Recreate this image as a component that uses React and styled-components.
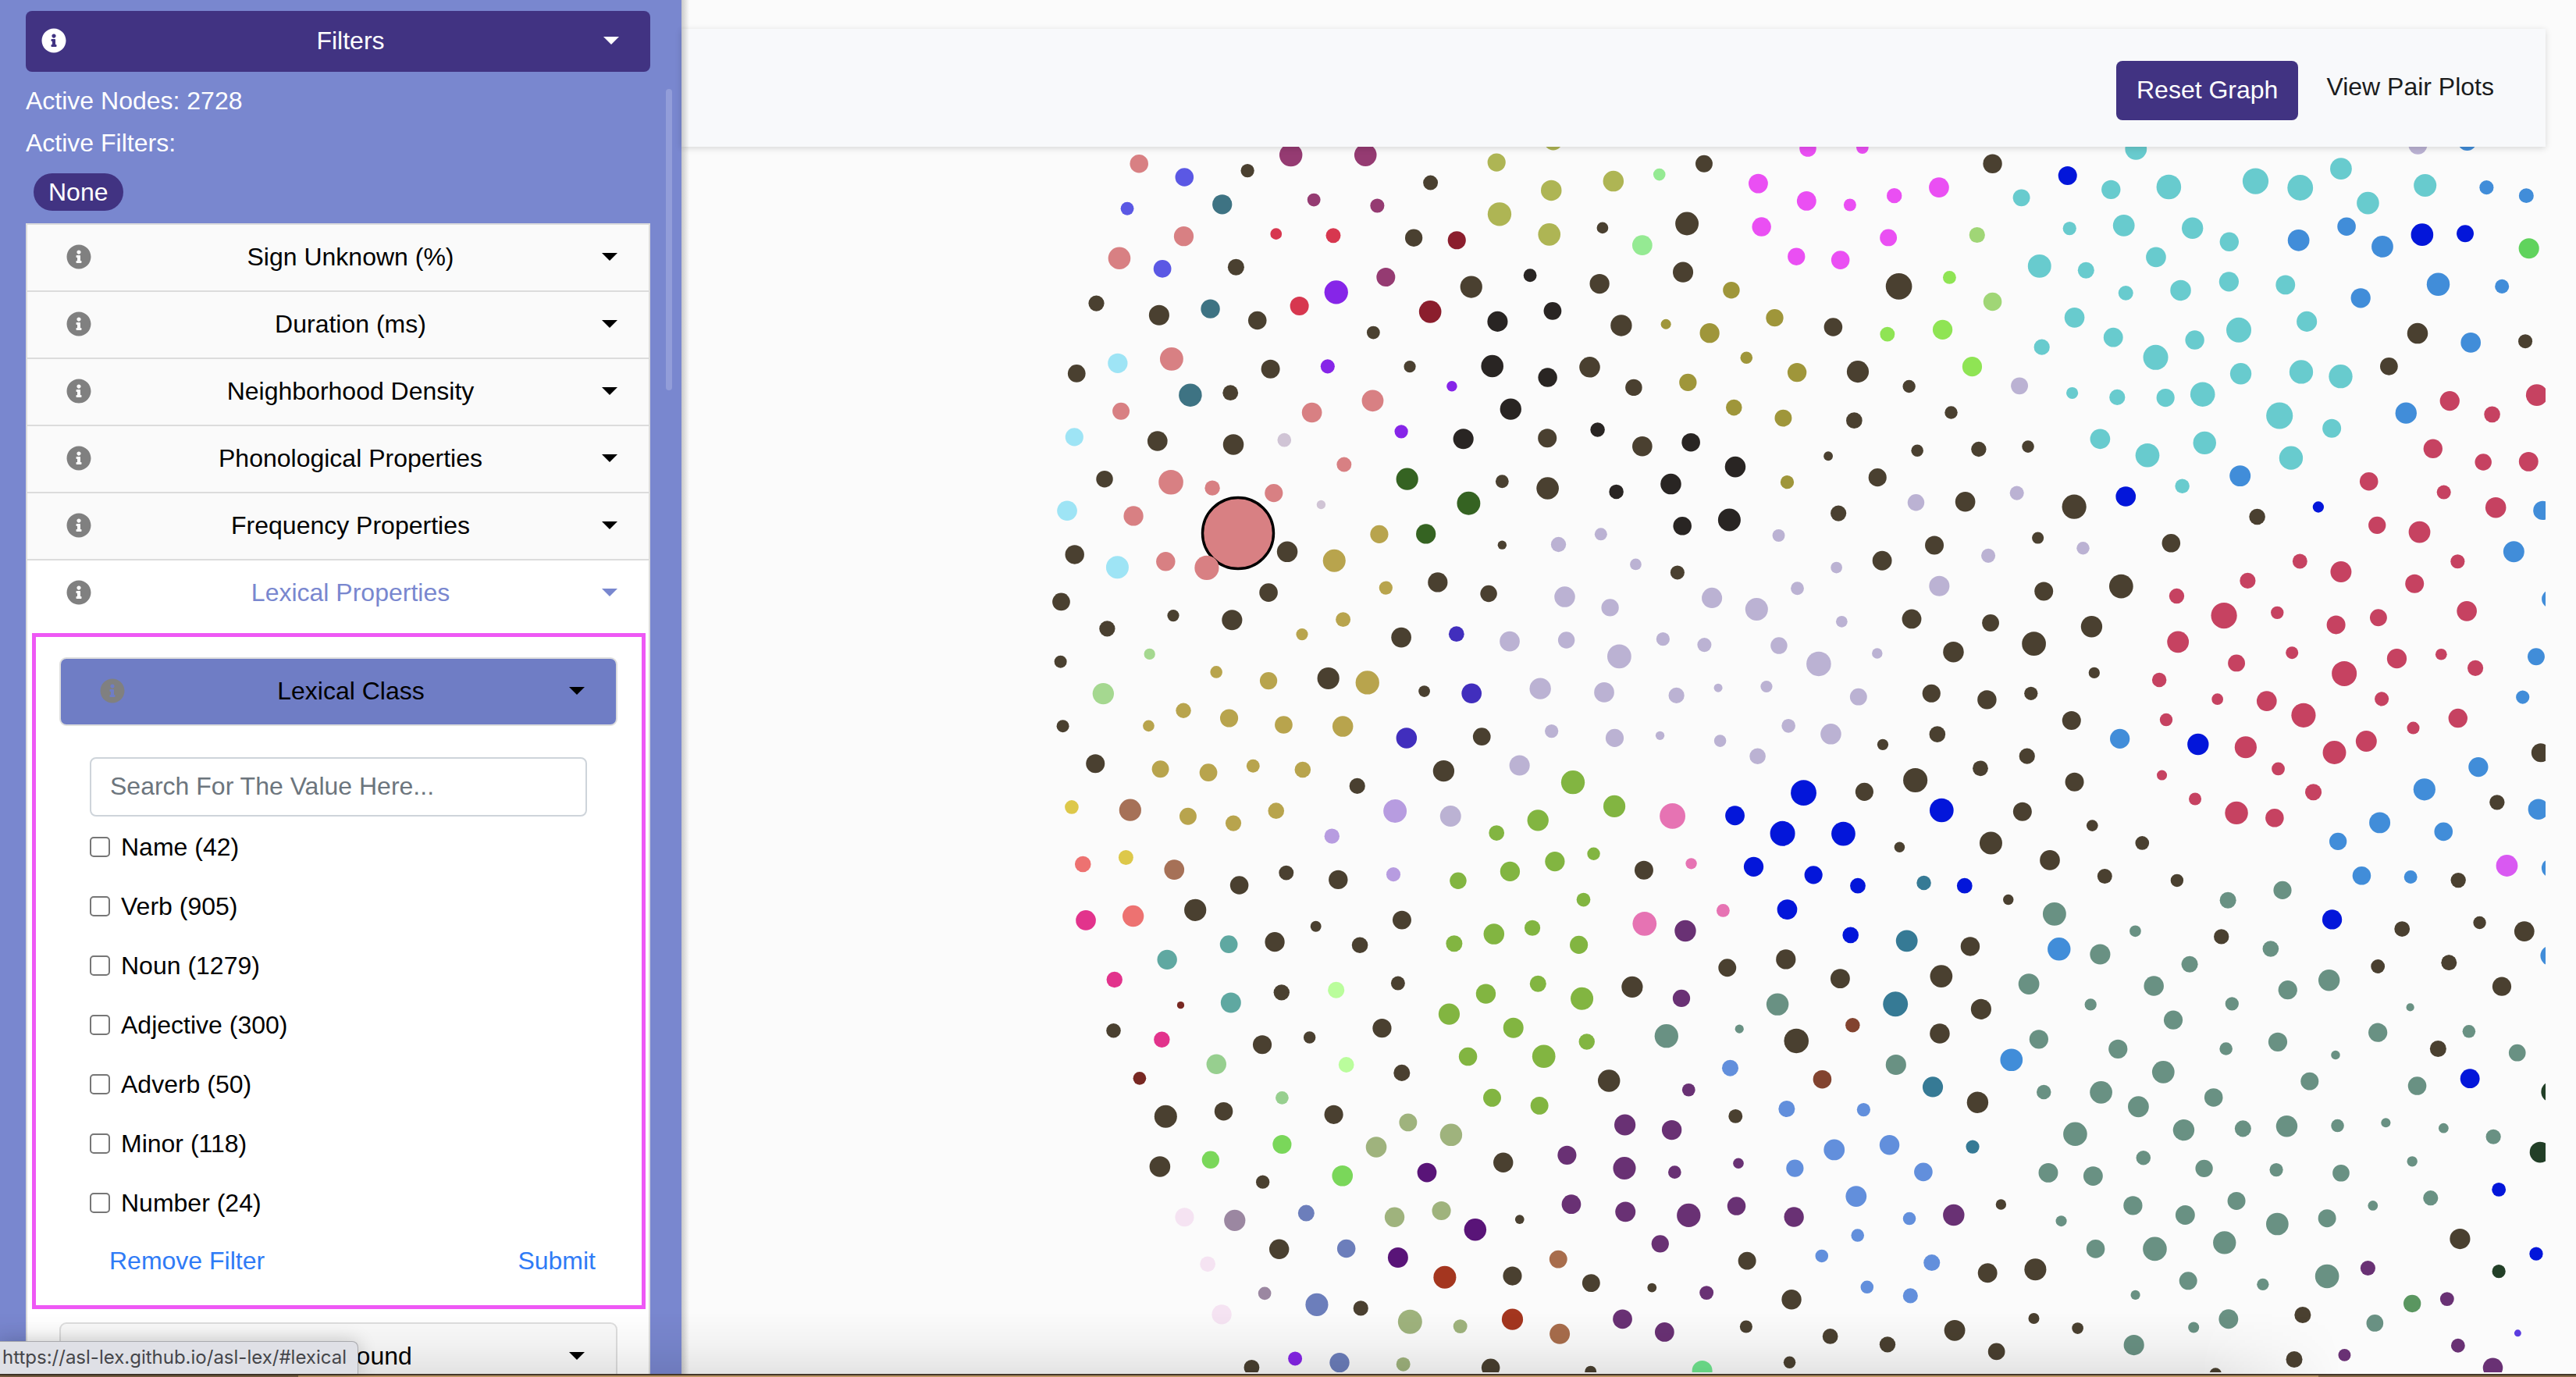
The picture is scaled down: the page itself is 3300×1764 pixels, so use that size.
import React from 'react';
import styled, { createGlobalStyle } from 'styled-components';
import { FaInfoCircle } from 'react-icons/fa';

const GlobalStyle = createGlobalStyle`
  *, *::before, *::after { box-sizing: border-box; }
  body {
    margin: 0;
    background: #fbfbfb;
    color: #000;
    font-family: "Liberation Sans", Arial, sans-serif;
    font-size: 32px;
    line-height: 48px;
  }
  button, input { font: inherit; color: inherit; }
`;

const Screen = styled.div`
  position: relative;
  display: flex;
  flex-direction: column;
  height: 100vh;
  overflow: hidden;
`;

const Window = styled.div`
  display: grid;
  grid-template-columns: 873px minmax(0, 1fr);
  flex: 1;
  min-height: 0;
`;

const DesktopEdge = styled.div`
  height: 4px;
  border-top: 2px solid #43372a;
  background: linear-gradient(90deg, #7b6142 0 382px, #bf9866 382px 90%, #8a6c48 90%);
`;

const BottomShade = styled.div`
  position: absolute;
  left: 0;
  right: 300px;
  bottom: 4px;
  height: 80px;
  pointer-events: none;
  background: linear-gradient(rgba(0, 0, 0, 0), rgba(0, 0, 0, 0.03) 50%, rgba(0, 0, 0, 0.09));
  mask-image: linear-gradient(90deg, #000 94%, transparent);
  z-index: 3;
`;

const StatusBubble = styled.div`
  position: absolute;
  left: 0;
  bottom: 4px;
  height: 42px;
  width: 459px;
  padding: 0 3px;
  border: 1px solid #a9aaae;
  border-width: 1px 1px 0 0;
  border-radius: 0 8px 0 0;
  background: #dfe0e6;
  color: #45464a;
  font-family: Inter, sans-serif;
  font-size: 24px;
  line-height: 40px;
  white-space: nowrap;
  box-shadow: 0 0 24px rgba(0, 0, 0, 0.2);
  z-index: 4;
`;

const Sidebar = styled.aside`
  position: relative;
  display: flex;
  flex-direction: column;
  padding: 14px 40px 0 33px;
  overflow: hidden;
  background: #7987cf;
`;

const ScrollThumb = styled.div`
  position: absolute;
  top: 114px;
  right: 12px;
  width: 8px;
  height: 386px;
  border-radius: 4px;
  background: #929dd9;
`;

const HeadingButton = styled.button`
  display: grid;
  grid-template-columns: auto 1fr auto;
  align-items: center;
  flex-shrink: 0;
  width: 100%;
  margin: 0;
  border: 0;
  cursor: pointer;
  svg { grid-row: 1; grid-column: 1; }
`;

const FiltersButton = styled(HeadingButton)`
  height: 78px;
  padding: 0 40px 2px 20px;
  border-radius: 8px;
  background: #413382;
  color: #fff;
`;

const ListButton = styled(HeadingButton)`
  height: 84px;
  padding: 0 40px 2px 50px;
  background: ${(p) => (p.$open ? '#fff' : '#fafafa')};
  color: ${(p) => (p.$open ? '#7987cf' : '#000')};
`;

const CardButton = styled(HeadingButton)`
  height: 88px;
  padding: 0 40px 2px 50px;
  border: 2px solid #dedede;
  border-radius: 9px;
  background: ${(p) => (p.$open ? '#6f7dc5' : '#fafafa')};
`;

const HeadingText = styled.span`
  grid-row: 1;
  grid-column: 1 / -1;
  padding-left: ${(p) => p.$indent}px;
  text-align: center;
`;

const Caret = styled.span`
  grid-row: 1;
  grid-column: 3;
  border: 10px solid transparent;
  border-top-color: currentColor;
  border-bottom: 0;
`;

const InfoIcon = styled(FaInfoCircle)`
  width: 32px;
  height: 32px;
  color: ${(p) => p.color};
`;

const Stats = styled.div`
  display: flex;
  flex-direction: column;
  gap: 6px;
  padding: 13px 0 15px;
  color: #fff;
`;

const Badge = styled.span`
  align-self: flex-start;
  flex-shrink: 0;
  margin: 0 10px 16px;
  padding: 0 19px;
  border-radius: 24px;
  background: #413382;
  color: #fff;
`;

const FilterList = styled.ul`
  flex-shrink: 0;
  margin: 0;
  padding: 0;
  border: 2px solid #dcdcdc;
  background: #fff;
  list-style: none;
`;

const FilterItem = styled.li`
  border-bottom: 2px solid #dcdcdc;
  &:last-child { border-bottom: 0; }
`;

const Highlight = styled.section`
  margin: 9px 4px 0 6px;
  padding: 26px 31px 33px 30px;
  border: 5px solid #ee58f5;
`;

const NextCard = styled.div`
  margin: 17px 40px 20px 41px;
`;

const ValueForm = styled.form`
  display: flex;
  flex-direction: column;
  padding-top: 40px;
`;

const SearchBox = styled.input`
  height: 76px;
  margin: 0 39px;
  padding: 0 24px 2px;
  border: 2px solid #ced4da;
  border-radius: 8px;
  background: #fff;
  &::placeholder { color: #6c757d; opacity: 1; }
`;

const Values = styled.div`
  display: flex;
  flex-direction: column;
  gap: 28px;
  padding: 15px 39px 26px;
`;

const ValueLabel = styled.label`
  display: flex;
  align-items: center;
  gap: 14px;
`;

const Checkbox = styled.input`
  appearance: none;
  width: 26px;
  height: 26px;
  margin: 0;
  border: 2px solid #767676;
  border-radius: 5px;
  background: #fff;
  &:checked { background: #2f7bf6; }
`;

const Actions = styled.div`
  display: flex;
  justify-content: space-between;
  padding: 0 28px 0 64px;
`;

const TextButton = styled.button`
  padding: 0;
  border: 0;
  background: none;
  color: #2f7bf6;
  cursor: pointer;
`;

const Main = styled.main`
  display: flex;
  flex-direction: column;
  padding: 37px 39px 2px 0;
  min-height: 0;
`;

const TopBar = styled.header`
  position: relative;
  display: flex;
  flex-shrink: 0;
  align-items: flex-start;
  justify-content: flex-end;
  gap: 36px;
  padding: 41px 66px 34px;
  background: #f8f9fb;
  box-shadow: 0 2px 8px rgba(0, 0, 0, 0.15);
`;

const SidebarShadow = styled.div`
  position: absolute;
  left: 873px;
  top: 0;
  bottom: 4px;
  width: 10px;
  background: linear-gradient(90deg, rgba(0, 0, 0, 0.2), rgba(0, 0, 0, 0));
`;

const ResetButton = styled.button`
  height: 76px;
  padding: 0 26px 2px;
  border: 0;
  border-radius: 8px;
  background: #413382;
  color: #fff;
  cursor: pointer;
`;

const NavLink = styled.a`
  padding: 9px 0;
  color: #1b1c1d;
  text-decoration: none;
`;

const Graph = styled.svg`
  display: block;
  flex: 1;
  width: 100%;
  min-height: 0;
`;

const palette = {
  k: '#4a4030', s: '#d88083', b: '#5b58e4', t: '#3e7383', m: '#953b72', o: '#aeb554',
  r: '#d7374f', R: '#8b1e2d', v: '#8625e8', n: '#292523', c: '#9ee4f5', l: '#d0c4d5',
  g: '#356322', y: '#b8a44d', L: '#bbb2d3', G: '#95ea93', p: '#ea4ff3', O: '#9f963a',
  e: '#8fe454', E: '#a0d676', T: '#68cbce', B: '#0316da', u: '#418dd9', a: '#60d35d',
  C: '#c64261', f: '#82b541', h: '#a5d890', i: '#412ebd', w: '#b79ce0', q: '#a67157',
  Y: '#ddc84a', S: '#ed7271', M: '#e2338c', A: '#5fa8a1', P: '#e673b3', Q: '#693174',
  D: '#367a95', F: '#699183', H: '#9fb37d', j: '#97cf8f', J: '#bafd9c', z: '#782822',
  K: '#7ad75a', x: '#591478', N: '#628fdc', U: '#6c7ebb', Z: '#f5e3f2', X: '#9b87a1',
  V: '#a4361f', W: '#a86d4c', I: '#82432f', d: '#223f27', 1: '#5a9660', 2: '#70e58f',
  3: '#d959f2', 5: '#5b3de0',
};

// Each tile covers a part of the network. Its nodes are "x y diameter colour",
// in units of 1/1568 of the tile's width (x, diameter) and height (y).
const tiles = [
  { left: 1330, top: 180, width: 660, height: 530, nodes: `307 88 56 s,445 139 56 b,637 114 41 k,769 55 70 m,996 55 68 m,1194 160 45 k,1395 83 55 o,271 258 40 b,560 242 60 t,839 225 40 m,1032 247 43 m,1404 279 72 o,443 363 60 s,724 354 35 r,898 360 45 r,1143 369 53 k,1274 378 55 R,247 446 68 s,378 486 54 b,602 480 50 k,1058 518 57 m,1318 555 67 k,1497 511 40 n,907 575 72 v,177 617 48 k,368 662 62 k,524 638 58 t,667 682 56 k,795 627 57 r,1193 649 68 R,1398 686 62 n,1020 728 40 k,242 844 60 c,406 828 71 s,117 883 54 k,707 866 57 k,881 856 43 v,1131 857 36 k,1382 855 68 n,463 965 70 t,585 956 47 k,1259 931 32 v,1018 986 66 s,252 1026 52 s,833 1031 61 s,1438 1018 65 n,110 1124 55 c,363 1139 61 k,594 1152 63 k,749 1135 42 l,1105 1103 41 v,1294 1131 62 n,931 1228 45 s,202 1283 51 k,404 1295 75 s,530 1317 46 s,717 1336 55 s,1123 1283 67 g,1412 1292 40 k,861 1380 27 l,88 1403 61 c,290 1423 60 s,1310 1375 71 g,1038 1492 55 y,1180 1491 60 g,1412 1533 27 k` },
  { left: 1970, top: 180, width: 660, height: 530, nodes: `47 2 56 o,822 30 51 p,988 27 37 p,506 88 52 k,1384 88 58 k,370 129 37 G,230 154 63 o,41 189 63 o,671 163 59 p,818 229 59 p,950 244 38 p,1085 209 46 p,1221 178 61 p,1472 217 52 T,197 331 35 k,454 315 71 k,681 327 58 p,35 356 68 o,318 397 61 G,1067 368 52 p,1337 358 48 E,787 440 53 p,921 453 56 p,1527 476 71 T,442 499 62 k,188 543 60 k,1099 553 80 k,1253 519 40 e,589 567 51 O,1384 611 56 E,45 646 54 n,721 672 53 O,254 701 65 k,390 696 31 O,523 730 60 O,899 707 56 k,1064 734 45 e,1232 717 60 e,1534 783 48 T,635 823 37 O,158 859 63 k,789 879 58 O,974 876 67 k,1322 857 60 e,30 898 58 n,292 936 51 k,457 917 53 O,1130 932 39 k,1466 930 52 L,597 1012 49 O,1258 1031 39 k,747 1052 52 O,963 1061 49 k,182 1096 44 n,29 1128 57 k,318 1159 61 k,466 1144 56 n,884 1196 28 k,1155 1175 37 k,1342 1170 46 k,1492 1160 37 k,601 1237 63 n,405 1302 63 n,239 1331 44 n,30 1318 68 k,1034 1277 55 k,759 1295 41 O,1301 1369 61 k,1151 1372 51 L,1458 1336 43 L,915 1413 48 k,583 1438 69 n,440 1461 56 n,192 1492 38 L,63 1531 46 L,733 1497 38 L,1207 1534 57 k,1522 1506 36 k` },
  { left: 2610, top: 180, width: 660, height: 530, nodes: `300 32 66 T,1158 17 57 L,1308 3 57 u,92 133 57 B,664 154 79 T,924 107 66 T,224 186 58 T,400 176 75 T,800 179 78 T,1180 170 69 T,1367 178 43 u,1488 209 45 u,1006 237 68 T,98 333 41 T,263 322 66 T,472 332 65 T,941 326 56 u,584 384 58 T,795 378 66 u,1171 357 68 B,1302 353 52 B,1050 402 66 u,1496 409 62 a,361 442 61 T,148 492 50 T,583 535 60 T,755 547 59 T,1220 545 70 u,1414 553 43 u,269 578 45 T,436 568 63 T,984 597 60 u,113 671 61 T,820 686 62 T,613 718 76 T,1157 731 63 k,1485 761 43 k,231 746 59 T,479 756 58 T,1319 766 61 u,360 822 76 T,1070 856 54 k,619 884 65 T,803 877 72 T,923 894 72 T,106 957 36 T,243 973 48 T,390 975 55 T,503 962 75 T,1520 965 66 C,1255 987 60 C,1384 1038 49 C,737 1043 81 T,1122 1033 65 u,896 1091 57 T,191 1131 61 T,509 1146 70 T,335 1193 73 T,772 1203 72 T,1204 1168 58 C,1357 1219 51 C,1495 1217 59 C,617 1271 64 u,441 1310 44 T,1009 1292 56 C,1237 1333 43 C,269 1349 61 B,112 1388 74 k,1395 1391 63 C,1538 1402 58 u,855 1389 34 B,669 1426 49 k,1034 1458 53 C,1163 1484 66 C,407 1526 56 k,139 1545 39 L` },
  { left: 1330, top: 700, width: 660, height: 530, nodes: `111 31 58 k,758 20 63 k,241 79 69 c,388 57 58 s,513 81 74 s,901 54 69 y,1216 136 60 k,701 175 56 k,1058 157 41 y,1371 179 51 k,70 210 54 k,411 262 36 k,590 279 62 k,928 277 45 y,210 312 48 k,803 333 36 y,1105 345 61 k,1273 332 47 i,1435 360 61 L,339 408 34 h,68 437 38 k,542 476 37 y,701 509 53 y,883 500 67 k,1002 516 72 y,1528 539 65 L,198 558 65 h,1175 549 35 k,1319 557 61 i,442 622 46 y,581 651 55 y,336 680 35 y,747 676 54 y,927 682 63 y,75 681 38 k,1350 721 54 k,1121 726 63 i,174 823 57 k,372 844 52 y,518 857 54 y,654 832 40 y,805 846 49 y,1234 851 65 k,1465 830 62 L,971 908 48 k,102 988 42 Y,280 999 67 q,456 1023 52 y,724 1002 49 y,594 1049 48 y,1086 1003 71 w,1255 1022 64 L,1395 1086 47 f,1521 1038 65 f,894 1098 46 w,267 1179 45 Y,136 1204 49 S,414 1225 61 q,755 1237 45 k,913 1263 58 k,1081 1243 43 w,1436 1232 60 f,1278 1267 51 f,612 1284 56 k,478 1378 67 k,145 1417 61 M,289 1401 65 S,845 1440 33 k,1107 1416 57 k,1387 1469 63 f,1504 1446 48 f,720 1499 60 k,580 1508 54 A,979 1511 49 k,1266 1505 50 f` },
  { left: 1970, top: 700, width: 660, height: 530, nodes: `298 68 35 L,425 99 43 k,909 80 35 L,1048 54 59 k,1371 35 43 L,790 159 40 L,1222 150 62 L,1540 170 57 k,82 191 63 L,530 195 62 L,666 238 69 L,220 232 53 L,1138 275 59 k,1378 290 52 k,925 285 35 L,87 355 51 L,381 351 41 L,507 373 43 L,734 376 51 L,1510 369 73 k,248 417 73 L,855 445 75 L,1033 405 32 L,1265 400 63 k,202 553 61 L,422 565 48 L,549 536 26 L,696 531 36 L,976 570 52 L,1198 557 55 k,1367 581 58 k,1501 557 41 k,42 700 41 L,763 680 42 L,892 711 63 L,1216 712 49 k,234 726 55 L,372 717 27 L,555 737 37 L,1050 751 34 k,669 795 49 L,1489 795 48 k,1347 841 47 k,1149 886 74 k,107 894 72 f,809 934 78 B,994 930 55 k,233 985 67 f,410 1022 78 P,600 1020 59 B,1229 1000 73 B,1475 1005 57 k,745 1088 76 B,930 1089 73 B,1379 1124 69 k,1101 1140 32 k,170 1165 39 f,52 1194 60 f,657 1214 60 B,323 1227 57 k,467 1202 34 P,839 1245 55 B,974 1286 47 B,1175 1275 44 D,1299 1286 47 B,139 1339 42 f,564 1380 40 P,1432 1339 32 k,759 1376 61 B,325 1430 73 P,449 1457 65 Q,952 1473 49 B,1123 1495 66 D,1316 1516 58 k,125 1510 55 f,755 1565 60 k` },
  { left: 2610, top: 700, width: 660, height: 530, nodes: `255 151 73 k,799 56 45 C,924 96 64 C,1279 57 43 C,1450 20 64 u,640 130 48 C,1148 141 57 C,424 188 46 C,1563 199 56 u,568 262 79 C,730 251 39 C,1307 245 61 C,1038 270 52 C,909 297 57 C,165 304 65 k,428 362 66 C,775 403 38 C,1229 409 35 C,1094 425 60 C,606 442 52 C,1518 418 52 u,934 482 76 C,1333 461 48 C,173 479 34 k,371 506 44 C,1477 571 41 u,548 579 35 C,698 586 61 C,1048 578 43 C,810 640 74 C,392 657 39 C,104 660 57 k,1280 651 58 C,1144 688 38 C,251 729 60 u,1001 738 64 C,489 750 65 B,634 761 67 C,904 781 71 C,1532 782 57 k,1342 836 60 u,733 843 40 C,379 867 31 C,113 893 57 k,1178 921 67 u,840 931 50 C,480 957 38 C,1399 970 46 k,606 1010 70 C,1525 996 63 u,722 1029 56 C,1042 1047 64 u,167 1058 35 k,1236 1081 56 u,319 1124 42 k,915 1118 53 u,38 1189 61 k,1429 1210 66 3,1136 1253 40 u,987 1248 56 u,205 1250 45 k,1563 1219 57 u,425 1266 39 k,1281 1265 46 k,746 1303 55 F,580 1341 50 F,52 1393 71 F,897 1414 60 B,1110 1450 47 k,1346 1426 39 k,298 1458 35 F,560 1479 46 k,1482 1459 61 k,66 1526 70 u,710 1525 49 F,1562 1551 62 u,191 1546 62 F,1252 1577 45 k` },
  { left: 1330, top: 1220, width: 970, height: 544, nodes: `267 27 41 A,158 101 33 M,295 195 15 z,399 186 42 A,504 148 33 k,617 139 34 J,745 114 29 k,1035 116 34 f,927 153 41 f,1126 171 47 f,1230 128 44 k,1427 57 37 k,1332 170 36 Q,1531 192 46 F,851 228 44 f,156 289 30 k,256 322 33 M,984 279 42 f,712 280 39 k,562 314 25 k,464 341 39 k,1136 330 33 f,1301 309 49 F,1452 283 18 F,1570 327 51 k,369 413 41 j,638 415 32 J,890 385 38 f,1047 384 48 f,210 465 27 z,753 445 34 k,1182 474 46 k,1433 427 34 N,1347 508 27 Q,505 537 27 j,940 537 37 f,1038 566 37 f,384 587 38 k,264 606 47 k,612 599 39 k,766 628 37 H,855 674 46 H,1444 605 29 k,1550 578 34 N,1215 637 44 Q,1312 656 41 Q,505 709 39 K,700 719 43 H,357 766 36 K,252 791 43 k,630 825 43 K,1095 749 39 Q,963 776 41 k,1214 797 47 Q,1450 779 22 Q,1318 812 27 Q,805 813 40 x,465 848 28 k,1567 797 36 N,1104 930 40 Q,1216 958 42 Q,1347 971 49 Q,1446 937 38 Q,1565 977 41 Q,303 978 39 Z,407 990 44 X,555 963 34 U,738 978 41 H,835 954 39 H,997 986 19 k,905 1024 46 x,1288 1076 36 Q,499 1096 41 k,638 1094 38 U,745 1127 42 x,1077 1133 37 W,1468 1139 37 k,351 1151 32 Z,842 1200 47 V,982 1195 39 k,1145 1221 37 k,1271 1238 19 k,1384 1257 29 Q,469 1259 27 X,577 1301 47 U,1560 1282 41 k,668 1314 31 k,380 1337 41 Z,770 1364 50 H,874 1381 29 H,982 1355 44 V,1080 1409 42 W,1210 1354 40 Q,1297 1402 40 Q,1466 1382 26 k,442 1533 32 k,532 1500 29 v,624 1515 41 U,756 1521 29 H,937 1534 38 k,1144 1548 24 k,1375 1545 42 2,1556 1514 25 k` },
  { left: 2300, top: 1220, width: 1000, height: 544, nodes: `792 44 33 F,1313 38 31 k,1170 52 28 k,1419 126 38 k,90 97 39 k,293 88 45 k,469 117 42 F,720 124 40 F,1072 103 43 F,989 139 38 F,201 191 50 D,593 193 24 F,877 190 27 F,373 210 41 k,1235 203 16 F,759 250 38 F,115 269 29 I,290 300 40 k,1170 296 38 F,1353 292 26 F,489 321 38 F,648 357 38 F,969 331 38 F,865 356 26 F,1291 356 33 k,1085 379 18 F,1450 371 34 F,434 397 45 u,202 415 41 F,739 442 45 F,54 469 37 I,276 497 41 D,1033 476 36 F,1249 493 37 F,1355 466 39 B,499 516 29 F,614 517 45 F,840 536 37 F,1519 515 42 d,366 554 43 k,689 570 42 F,137 581 27 N,562 671 48 F,780 656 43 F,899 651 33 F,987 642 43 F,1089 640 26 F,1186 629 19 F,1302 649 20 F,1402 681 30 F,78 729 42 N,189 711 40 N,356 718 27 D,1496 738 42 d,699 759 29 F,1239 772 21 F,257 811 37 N,508 814 39 F,598 826 39 F,821 798 35 F,966 803 27 F,1096 815 34 F,1413 876 28 B,122 901 42 N,886 918 36 F,678 935 38 F,413 931 21 k,1160 935 20 F,1276 907 30 F,318 970 43 Q,229 983 26 N,783 970 39 F,534 992 22 F,968 1003 45 F,1068 982 36 F,125 1045 26 N,862 1072 46 F,1335 1058 41 k,603 1095 37 F,722 1095 48 F,53 1121 26 N,274 1146 33 N,1488 1113 27 B,386 1184 39 k,482 1171 44 k,1150 1166 30 Q,1413 1178 27 d,1068 1196 48 F,789 1213 36 F,144 1236 26 N,231 1268 30 N,683 1265 19 F,939 1226 24 F,1239 1297 35 1,1309 1280 28 Q,1019 1339 33 k,870 1354 39 F,479 1352 22 k,567 1388 23 k,800 1385 22 F,1164 1369 34 F,1451 1406 14 5,70 1418 31 k,320 1396 42 k,185 1448 32 k,404 1474 34 k,680 1450 41 F,1331 1452 28 Q,1103 1487 25 Q,1002 1503 33 k,1401 1534 40 Q,844 1556 24 k` },
];

const UNITS = 1568;

const nodes = tiles.flatMap((tile) =>
  tile.nodes.split(',').map((entry) => {
    const [x, y, d, colour] = entry.trim().split(' ');
    return {
      cx: tile.left + (x * tile.width) / UNITS,
      cy: tile.top + (y * tile.height) / UNITS,
      r: (d * tile.width) / UNITS / 2,
      fill: palette[colour],
    };
  })
);

const filterNames = [
  'Sign Unknown (%)',
  'Duration (ms)',
  'Neighborhood Density',
  'Phonological Properties',
  'Frequency Properties',
];

const lexicalClasses = [
  ['Name', 42],
  ['Verb', 905],
  ['Noun', 1279],
  ['Adjective', 300],
  ['Adverb', 50],
  ['Minor', 118],
  ['Number', 24],
];

function Heading({ as: Button, text, indent = 22, iconColor = '#808080', open }) {
  return (
    <Button type="button" $open={open} aria-expanded={Boolean(open)}>
      <InfoIcon color={iconColor} aria-hidden="true" />
      <HeadingText $indent={indent}>{text}</HeadingText>
      <Caret />
    </Button>
  );
}

function LexicalClassForm() {
  return (
    <ValueForm onSubmit={(event) => event.preventDefault()}>
      <SearchBox type="text" aria-label="Search values" placeholder="Search For The Value Here..." />
      <Values>
        {lexicalClasses.map(([name, count]) => (
          <ValueLabel key={name} htmlFor={`class-${name}`}>
            <Checkbox type="checkbox" id={`class-${name}`} />
            {`${name} (${count})`}
          </ValueLabel>
        ))}
      </Values>
      <Actions>
        <TextButton type="button">Remove Filter</TextButton>
        <TextButton type="submit">Submit</TextButton>
      </Actions>
    </ValueForm>
  );
}

function NodeGraph() {
  return (
    <Graph viewBox="873 188 2388 1570" preserveAspectRatio="xMinYMin slice" role="img" aria-label="Sign network">
      <circle cx="1586" cy="683" r="45.5" fill="#d88083" stroke="#000" strokeWidth="3.4" />
      {nodes.map((node, index) => (
        <circle key={index} {...node} />
      ))}
    </Graph>
  );
}

export default function App() {
  return (
    <Screen>
      <GlobalStyle />
      <Window>
        <Sidebar>
          <Heading as={FiltersButton} text="Filters" indent={52} iconColor="#fff" open />
          <Stats>
            <span>Active Nodes: 2728</span>
            <span>Active Filters:</span>
          </Stats>
          <Badge>None</Badge>
          <FilterList>
            {filterNames.map((name) => (
              <FilterItem key={name}>
                <Heading as={ListButton} text={name} />
              </FilterItem>
            ))}
            <FilterItem>
              <Heading as={ListButton} text="Lexical Properties" open />
              <Highlight>
                <Heading as={CardButton} text="Lexical Class" open />
                <LexicalClassForm />
              </Highlight>
              <NextCard>
                <Heading as={CardButton} text="Compound" />
              </NextCard>
            </FilterItem>
          </FilterList>
          <ScrollThumb />
        </Sidebar>
        <Main>
          <TopBar>
            <ResetButton type="button">Reset Graph</ResetButton>
            <NavLink href="#pair-plots">View Pair Plots</NavLink>
          </TopBar>
          <NodeGraph />
        </Main>
      </Window>
      <SidebarShadow />
      <BottomShade />
      <StatusBubble>https://asl-lex.github.io/asl-lex/#lexical</StatusBubble>
      <DesktopEdge />
    </Screen>
  );
}
